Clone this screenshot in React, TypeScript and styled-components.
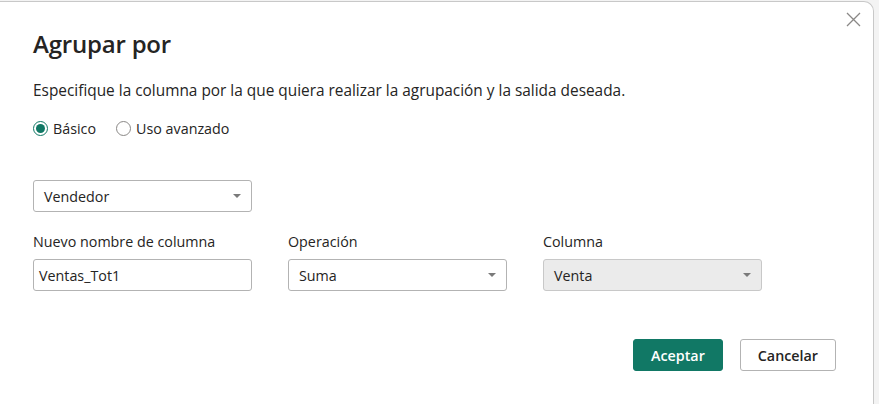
import React from "react";
import styled, { createGlobalStyle } from "styled-components";

const Global = createGlobalStyle`
  html, body { margin: 0; padding: 0; background: #f3f3f3; }
  body { font-family: "Open Sans", "Noto Sans", sans-serif; color: #252423; }
  * { box-sizing: border-box; }
`;

const Page = styled.div`
  width: 879px;
  height: 404px;
  overflow: hidden;
  background: #f3f3f3;
  position: relative;
`;

const Dialog = styled.div`
  width: 874px;
  height: 420px;
  margin-top: 1px;
  background: #ffffff;
  border-top: 1px solid #c8c8c8;
  border-right: 1px solid #c8c8c8;
  border-top-right-radius: 10px;
  padding: 25px 0 0 33px;
  position: relative;
  display: flex;
  flex-direction: column;
`;

const Close = styled.button`
  position: absolute;
  top: 8px;
  right: 11px;
  width: 18px;
  height: 18px;
  padding: 0;
  border: none;
  background: transparent;
  display: flex;
  align-items: center;
  justify-content: center;
`;

const Title = styled.h1`
  margin: 0;
  font-size: 24px;
  font-weight: 600;
  line-height: 34px;
  letter-spacing: -0.2px;
  color: #252423;
`;

const Desc = styled.p`
  margin: 20px 0 0;
  font-size: 15.4px;
  line-height: 20px;
  color: #252423;
`;

const RadioRow = styled.div`
  display: flex;
  gap: 20px;
  margin-top: 17px;
  height: 20px;
  align-items: center;
`;

const RadioLabel = styled.label`
  display: flex;
  align-items: center;
  gap: 5px;
  font-size: 14.3px;
  color: #252423;
`;

const RadioCircle = styled.span<{ $checked?: boolean }>`
  width: 15px;
  height: 15px;
  border-radius: 50%;
  border: 1px solid ${(p) => (p.$checked ? "#117865" : "#8a8886")};
  display: flex;
  align-items: center;
  justify-content: center;
  &::after {
    content: "";
    width: 9px;
    height: 9px;
    border-radius: 50%;
    background: ${(p) => (p.$checked ? "#117865" : "transparent")};
  }
`;

const Select = styled.div<{ $disabled?: boolean }>`
  width: 219px;
  height: 32px;
  border: 1px solid ${(p) => (p.$disabled ? "#c8c8c8" : "#b3b3b3")};
  border-radius: 3px;
  background: ${(p) => (p.$disabled ? "#ebebeb" : "#ffffff")};
  display: flex;
  align-items: center;
  justify-content: space-between;
  padding: 0 10px 0 10px;
  font-size: 14.3px;
  color: #252423;
`;

const Input = styled.div`
  width: 219px;
  height: 32px;
  border: 1px solid #b3b3b3;
  border-radius: 3px;
  background: #ffffff;
  display: flex;
  align-items: center;
  padding: 0 5px;
  font-size: 14.3px;
  color: #252423;
`;

const Caret = styled.span`
  width: 0;
  height: 0;
  border-left: 4px solid transparent;
  border-right: 4px solid transparent;
  border-top: 4px solid #7a7a7a;
`;

const GroupSelect = styled.div`
  margin-top: 42px;
`;

const FieldsRow = styled.div`
  display: flex;
  gap: 36px;
  margin-top: 20px;
`;

const Field = styled.div`
  display: flex;
  flex-direction: column;
  gap: 7px;
`;

const FieldLabel = styled.span`
  font-size: 14.3px;
  line-height: 20px;
  color: #252423;
`;

const Footer = styled.div`
  display: flex;
  gap: 17px;
  margin-top: 48px;
  padding-left: 600px;
`;

const Button = styled.button<{ $primary?: boolean }>`
  height: 32px;
  padding: 0 17px;
  border-radius: 3px;
  font-family: "Open Sans", "Noto Sans", sans-serif;
  font-size: 14.3px;
  font-weight: 600;
  border: 1px solid ${(p) => (p.$primary ? "#117865" : "#b3b3b3")};
  background: ${(p) => (p.$primary ? "#117865" : "#ffffff")};
  color: ${(p) => (p.$primary ? "#ffffff" : "#252423")};
`;

export default function App() {
  return (
    <>
      <Global />
      <Page>
        <Dialog>
          <Close aria-label="Cerrar">
            <svg width="15" height="15" viewBox="0 0 15 15">
              <path d="M1 1L14 14M14 1L1 14" stroke="#8a8886" strokeWidth="1.3" />
            </svg>
          </Close>
          <Title>Agrupar por</Title>
          <Desc>Especifique la columna por la que quiera realizar la agrupación y la salida deseada.</Desc>
          <RadioRow>
            <RadioLabel>
              <RadioCircle $checked />
              Básico
            </RadioLabel>
            <RadioLabel>
              <RadioCircle />
              Uso avanzado
            </RadioLabel>
          </RadioRow>
          <GroupSelect>
            <Select>
              Vendedor
              <Caret />
            </Select>
          </GroupSelect>
          <FieldsRow>
            <Field>
              <FieldLabel>Nuevo nombre de columna</FieldLabel>
              <Input>Ventas_Tot1</Input>
            </Field>
            <Field>
              <FieldLabel>Operación</FieldLabel>
              <Select>
                Suma
                <Caret />
              </Select>
            </Field>
            <Field>
              <FieldLabel>Columna</FieldLabel>
              <Select $disabled>
                Venta
                <Caret />
              </Select>
            </Field>
          </FieldsRow>
          <Footer>
            <Button $primary>Aceptar</Button>
            <Button>Cancelar</Button>
          </Footer>
        </Dialog>
      </Page>
    </>
  );
}
